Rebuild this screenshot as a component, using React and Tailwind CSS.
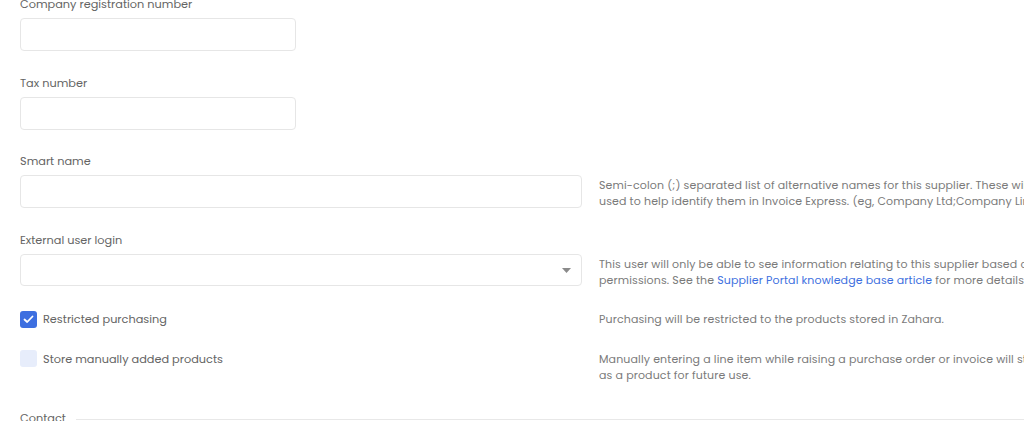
import React from 'react';

const font = { fontFamily: 'Poppins, "Open Sans", "Noto Sans", sans-serif' };

const Label = ({ children }) => (
  <div className="text-[11.3px] leading-[18px] text-[#646464] mb-[5px]">{children}</div>
);

const Input = ({ className = '' }) => (
  <div className={`h-[33px] rounded-[4px] border border-[#e6e6e6] bg-white ${className}`} />
);

const Help = ({ children }) => (
  <div className="text-[11px] leading-[16px] tracking-[0.13px] text-[#7a7a7a] pt-[2px]">{children}</div>
);

export default function App() {
  return (
    <div className="w-[1024px] h-[421px] overflow-hidden bg-white" style={font}>
      <div className="w-[1200px] pl-[20px] -mt-[5px]">
        {/* short fields */}
        <div className="w-[276px]">
          <Label>Company registration number</Label>
          <Input />
        </div>
        <div className="w-[276px] mt-[23px]">
          <Label>Tax number</Label>
          <Input />
        </div>

        {/* smart name */}
        <div className="mt-[22px] flex gap-[17px]">
          <div className="w-[562px] shrink-0">
            <Label>Smart name</Label>
            <Input />
          </div>
          <div className="w-[500px] pt-[23px]">
            <Help>
              Semi-colon (;) separated list of alternative names for this supplier. These will be
              <br />
              used to help identify them in Invoice Express. (eg, Company Ltd;Company Limited)
            </Help>
          </div>
        </div>

        {/* external user login */}
        <div className="mt-[22px] flex gap-[17px]">
          <div className="w-[562px] shrink-0">
            <Label>External user login</Label>
            <div className="h-[32px] rounded-[4px] border border-[#e6e6e6] bg-white flex items-center justify-end pr-[10px]">
              <svg width="9" height="5" viewBox="0 0 9 5">
                <path d="M0 0 L9 0 L4.5 5 Z" fill="#8a8a8a" />
              </svg>
            </div>
          </div>
          <div className="w-[500px] pt-[23px]">
            <Help>
              This user will only be able to see information relating to this supplier based on their
              <br />
              permissions. See the <span className="text-[#3d6fe0]">Supplier Portal knowledge base article</span> for more details.
            </Help>
          </div>
        </div>

        {/* checkboxes */}
        <div className="mt-[22px] flex gap-[17px]">
          <div className="w-[562px] shrink-0 flex items-center gap-[6px]">
            <div className="w-[17px] h-[17px] rounded-[3px] bg-[#3d6fe0] flex items-center justify-center">
              <svg width="11" height="9" viewBox="0 0 11 9">
                <path d="M1.5 4.5 L4.2 7 L9.5 1.5" stroke="white" strokeWidth="1.8" fill="none" strokeLinecap="round" strokeLinejoin="round" />
              </svg>
            </div>
            <span className="text-[11.3px] leading-[18px] text-[#646464]">Restricted purchasing</span>
          </div>
          <div className="w-[500px] -mt-[1px]">
            <Help>Purchasing will be restricted to the products stored in Zahara.</Help>
          </div>
        </div>

        <div className="mt-[22px] flex gap-[17px]">
          <div className="w-[562px] shrink-0 flex items-start gap-[6px]">
            <div className="w-[17px] h-[17px] rounded-[3px] bg-[#e7edfb]" />
            <span className="text-[11.3px] leading-[18px] text-[#646464]">Store manually added products</span>
          </div>
          <div className="w-[500px] -mt-[1px]">
            <Help>
              Manually entering a line item while raising a purchase order or invoice will store it
              <br />
              as a product for future use.
            </Help>
          </div>
        </div>

        {/* contact section */}
        <div className="mt-[26px] flex items-end gap-[10px]">
          <span className="text-[11.3px] leading-[18px] text-[#646464]">Contact</span>
          <div className="flex-1 border-b border-[#e8e8e8] mb-[7px]" />
        </div>
      </div>
    </div>
  );
}
